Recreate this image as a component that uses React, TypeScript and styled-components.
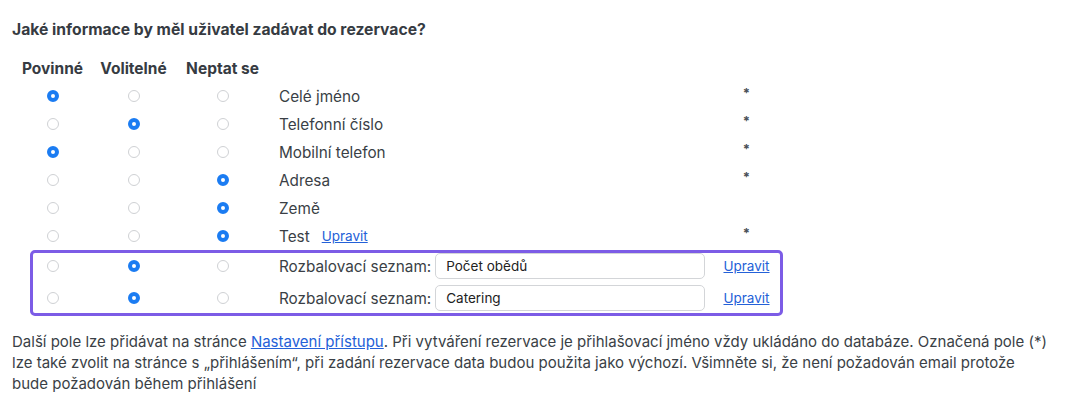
import React from 'react';
import styled, { createGlobalStyle } from 'styled-components';

const GlobalStyle = createGlobalStyle`
  html, body {
    margin: 0;
    padding: 0;
    background: #ffffff;
  }
  body {
    font-family: Inter, "Noto Sans", "Liberation Sans", sans-serif;
    color: #383d44;
  }
`;

const Page = styled.div`
  padding: 20px 12px 0 12px;
  width: 1052px;
`;

const Title = styled.h3`
  margin: 0 0 14px 0;
  font-size: 15.7px;
  line-height: 20px;
  font-weight: 700;
  color: #363b42;
`;

const Row = styled.div<{ $h?: number }>`
  display: grid;
  grid-template-columns: 81px 81px 97px 442px 67px;
  align-items: center;
  height: ${p => p.$h ?? 28}px;
`;

const HeadCell = styled.div`
  text-align: center;
  font-size: 15.5px;
  font-weight: 700;
  color: #363b42;
`;

const Cell = styled.div`
  display: flex;
  justify-content: center;
  align-items: center;
`;

const LabelCell = styled.div`
  display: flex;
  align-items: center;
  gap: 12px;
  padding: 0 8px;
  font-size: 15.3px;
  color: #3a3f46;
  white-space: nowrap;
`;

const StarCell = styled.div`
  text-align: center;
  font-size: 13px;
  font-weight: 700;
  color: #4a4f57;
  transform: translateY(-3px);
`;

const Radio = styled.input.attrs({ type: 'radio', readOnly: true })`
  appearance: none;
  -webkit-appearance: none;
  margin: 0;
  width: 12px;
  height: 12px;
  border-radius: 50%;
  border: 1px solid #cfd1d4;
  background: #fff;
  box-sizing: border-box;

  &:checked {
    border: 4px solid #1b7cf2;
    background: #fff;
  }
`;

const Link = styled.a`
  color: #2461d8;
  text-decoration: underline;
  font-size: 13.5px;
  cursor: pointer;
`;

const InlineLink = styled.a`
  color: #2461d8;
  text-decoration: underline;
  cursor: pointer;
`;

const Highlight = styled.div`
  position: relative;

  &::after {
    content: '';
    position: absolute;
    left: 18px;
    right: 281px;
    top: 0;
    bottom: -2px;
    border: 3px solid #7c5ce6;
    border-radius: 5px;
    pointer-events: none;
  }
`;

const FieldWrap = styled.div`
  display: flex;
  align-items: center;
  gap: 4px;
  padding-left: 8px;
  padding-right: 8px;
  font-size: 15.3px;
  color: #3a3f46;
  white-space: nowrap;
`;

const TextInput = styled.input`
  flex: 1;
  height: 26px;
  box-sizing: border-box;
  border: 1px solid #d3d5d8;
  border-radius: 5px;
  padding: 0 10px;
  font-family: inherit;
  font-size: 13.5px;
  color: #222;
  outline: none;
`;

const Note = styled.p`
  margin: 17px 0 0 0;
  font-size: 15px;
  line-height: 21px;
  color: #3a3f46;
`;

type Field = {
  label: string;
  choice: 0 | 1 | 2;
  star?: boolean;
  edit?: boolean;
};

const fields: Field[] = [
  { label: 'Celé jméno', choice: 0, star: true },
  { label: 'Telefonní číslo', choice: 1, star: true },
  { label: 'Mobilní telefon', choice: 0, star: true },
  { label: 'Adresa', choice: 2, star: true },
  { label: 'Země', choice: 2 },
  { label: 'Test', choice: 2, star: true, edit: true },
];

const dropdowns = [
  { value: 'Počet obědů', choice: 1 },
  { value: 'Catering', choice: 1 },
];

const Radios: React.FC<{ name: string; choice: number }> = ({ name, choice }) => (
  <>
    {[0, 1, 2].map(i => (
      <Cell key={i}>
        <Radio name={name} checked={choice === i} />
      </Cell>
    ))}
  </>
);

export default function App() {
  return (
    <Page>
      <GlobalStyle />
      <Title>Jaké informace by měl uživatel zadávat do rezervace?</Title>

      <Row>
        <HeadCell>Povinné</HeadCell>
        <HeadCell>Volitelné</HeadCell>
        <HeadCell>Neptat se</HeadCell>
        <div />
        <div />
      </Row>

      {fields.map((f, idx) => (
        <Row key={f.label}>
          <Radios name={`f${idx}`} choice={f.choice} />
          <LabelCell>
            {f.label}
            {f.edit && <Link>Upravit</Link>}
          </LabelCell>
          <StarCell>{f.star ? '*' : ''}</StarCell>
        </Row>
      ))}

      <Highlight>
        {dropdowns.map((d, idx) => (
          <Row key={d.value} $h={32}>
            <Radios name={`d${idx}`} choice={d.choice} />
            <FieldWrap>
              Rozbalovací seznam:
              <TextInput defaultValue={d.value} />
            </FieldWrap>
            <Cell>
              <Link>Upravit</Link>
            </Cell>
          </Row>
        ))}
      </Highlight>

      <Note>
        Další pole lze přidávat na stránce <InlineLink>Nastavení přístupu</InlineLink>. Při vytváření rezervace je přihlašovací jméno vždy ukládáno do databáze. Označená pole (*)
        <br />
        lze také zvolit na stránce s „přihlášením“, při zadání rezervace data budou použita jako výchozí. Všimněte si, že není požadován email protože
        <br />
        bude požadován během přihlášení
      </Note>
    </Page>
  );
}
